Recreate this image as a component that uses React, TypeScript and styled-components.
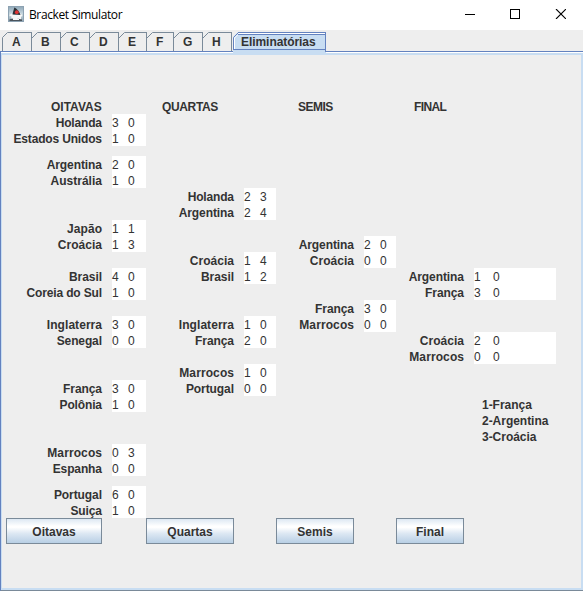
import React from "react";
import styled, { createGlobalStyle } from "styled-components";

const GlobalStyle = createGlobalStyle`
  * { box-sizing: border-box; }
  html, body { margin: 0; padding: 0; overflow: hidden; }
`;

const STEEL = "#7a8a99";
const BLUE = "#6382bf";
const PALE = "#c8ddf2";

const Window = styled.div`
  width: 583px;
  height: 591px;
  display: flex;
  flex-direction: column;
  background: #eeeeee;
  color: #333333;
  font: bold 12px/16px "Liberation Sans", Arial, sans-serif;
  white-space: pre;
`;

const TitleBar = styled.header`
  height: 30px;
  flex: none;
  display: flex;
  align-items: center;
  padding: 0 17px 2px 8px;
  background: #ffffff;
  color: #000000;
`;

const Title = styled.span`
  flex: 1;
  margin: 2px 0 0 5px;
  font: 12px/16px "Open Sans", "Noto Sans", sans-serif;
  letter-spacing: -0.38px;
`;

const Controls = styled.div`
  display: flex;
  gap: 35px;
  width: 102px;
  svg { display: block; flex: none; }
`;

const TabStrip = styled.nav`
  height: 21px;
  flex: none;
  display: flex;
  padding: 2px 0 0 2px;
`;

const TabBox = styled.div<{ $w: number }>`
  width: ${(p) => p.$w}px;
  height: 19px;
  display: flex;
  svg { flex: none; display: block; }
`;

const TabBody = styled.div<{ $pad: number }>`
  flex: 1;
  border-top: 1px solid ${STEEL};
  border-right: 1px solid ${STEEL};
  padding: 1px 0 0 ${(p) => p.$pad}px;
`;

const ActiveTab = styled.div`
  width: 93px;
  height: 22px;
  margin-left: 1px;
  display: flex;
  position: relative;
  z-index: 1;
  svg { flex: none; display: block; }
`;

const ActiveBody = styled.div`
  flex: 1;
  height: 22px;
  padding: 2px 0 0 3px;
  letter-spacing: -0.06px;
  background:
    linear-gradient(${BLUE}, ${BLUE}) right top / 1px 20px no-repeat,
    linear-gradient(
      ${BLUE} 0 1px, #ffffff 1px 2px, ${BLUE} 2px 3px,
      ${PALE} 3px 17px, ${BLUE} 17px 18px, ${PALE} 18px
    );
`;

const Panel = styled.main`
  flex: 1;
  display: flex;
  flex-direction: column;
  border: solid ${STEEL};
  border-width: 1px 0 1px 1px;
  border-top-color: ${BLUE};
  border-left-color: ${BLUE};
  padding-top: 1px;
  background: #ffffff;
`;

const PanelInner = styled.div`
  flex: 1;
  border: 2px solid ${PALE};
  border-left-width: 1px;
  background: #eeeeee;
`;

const Bracket = styled.section`
  display: grid;
  grid-template-columns: 144px 130px 120px 185px;
  height: 446px;
  margin-top: 43px;
`;

const Stage = styled.div`
  display: flex;
  flex-direction: column;
`;

const StageTitle = styled.div<{ $left: number; $track: number }>`
  height: 16px;
  padding-top: 1px;
  margin-left: ${(p) => p.$left}px;
  letter-spacing: ${(p) => p.$track}px;
`;

const Match = styled.div<{ $gap: number }>`
  margin-top: ${(p) => p.$gap}px;
`;

const TeamRow = styled.div<{ $label: number }>`
  display: grid;
  grid-template-columns: ${(p) => p.$label}px auto;
  column-gap: 10px;
  height: 16px;
`;

const TeamName = styled.span<{ $track: number }>`
  justify-self: end;
  padding-top: 1px;
  letter-spacing: ${(p) => p.$track}px;
  margin-right: ${(p) => -p.$track}px;
`;

const Score = styled.div<{ $w: number; $step: number }>`
  width: ${(p) => p.$w}px;
  height: 16px;
  display: grid;
  grid-template-columns: ${(p) => p.$step}px auto;
  background: #ffffff;
  font-weight: normal;
  padding-top: 1px;
`;

const Ranking = styled.div`
  margin: 33px 0 0 86px;
  letter-spacing: -0.03px;
`;

const StageButton = styled.button<{ $left: number; $w: number }>`
  width: ${(p) => p.$w}px;
  height: 26px;
  margin: auto 0 0 ${(p) => p.$left}px;
  padding: 1px 0 0;
  border: 1px solid ${STEEL};
  background: linear-gradient(#dde8f3 0%, #ffffff 30%, #ffffff 35%, #dde8f3 60%, #b8cfe5 100%);
  font: inherit;
  color: inherit;
`;

const tabs: [string, number, number][] = [
  ["A", 30, 3], ["B", 29, 3], ["C", 29, 3], ["D", 29, 3],
  ["E", 28, 3], ["F", 27, 3], ["G", 29, 3], ["H", 29, 3],
];

const nameTracking: Record<string, number> = {
  "Holanda": -0.17,
  "Estados Unidos": -0.17,
  "Argentina": -0.08,
  "Austrália": 0.02,
  "Japão": 0.05,
  "Croácia": 0.04,
  "Brasil": -0.06,
  "Coreia do Sul": -0.16,
  "Inglaterra": 0.05,
  "Senegal": -0.12,
  "França": -0.08,
  "Polônia": -0.15,
  "Marrocos": 0.1,
  "Espanha": -0.12,
  "Portugal": -0.08,
  "Suiça": -0.12,
};

type Team = [string, string, string];
type Pair = { gap: number; teams: [Team, Team] };
type StageData = {
  title: string; left: number; track: number; label: number;
  box: number; step: number; button: string; bLeft: number; bWidth: number;
  matches: Pair[]; ranking?: string[];
};

const stages: StageData[] = [
  {
    title: "OITAVAS", left: 49, track: 0, label: 100, box: 34, step: 16,
    button: "Oitavas", bLeft: 4, bWidth: 96,
    matches: [
      { gap: 0, teams: [["Holanda", "3", "0"], ["Estados Unidos", "1", "0"]] },
      { gap: 10, teams: [["Argentina", "2", "0"], ["Austrália", "1", "0"]] },
      { gap: 32, teams: [["Japão", "1", "1"], ["Croácia", "1", "3"]] },
      { gap: 16, teams: [["Brasil", "4", "0"], ["Coreia do Sul", "1", "0"]] },
      { gap: 16, teams: [["Inglaterra", "3", "0"], ["Senegal", "0", "0"]] },
      { gap: 32, teams: [["França", "3", "0"], ["Polônia", "1", "0"]] },
      { gap: 32, teams: [["Marrocos", "0", "3"], ["Espanha", "0", "0"]] },
      { gap: 10, teams: [["Portugal", "6", "0"], ["Suiça", "1", "0"]] },
    ],
  },
  {
    title: "QUARTAS", left: 16, track: -0.35, label: 88, box: 32, step: 16,
    button: "Quartas", bLeft: 0, bWidth: 88,
    matches: [
      { gap: 74, teams: [["Holanda", "2", "3"], ["Argentina", "2", "4"]] },
      { gap: 32, teams: [["Croácia", "1", "4"], ["Brasil", "1", "2"]] },
      { gap: 32, teams: [["Inglaterra", "1", "0"], ["França", "2", "0"]] },
      { gap: 16, teams: [["Marrocos", "1", "0"], ["Portugal", "0", "0"]] },
    ],
  },
  {
    title: "SEMIS", left: 22, track: -0.5, label: 78, box: 32, step: 16,
    button: "Semis", bLeft: 0, bWidth: 78,
    matches: [
      { gap: 122, teams: [["Argentina", "2", "0"], ["Croácia", "0", "0"]] },
      { gap: 32, teams: [["França", "3", "0"], ["Marrocos", "0", "0"]] },
    ],
  },
  {
    title: "FINAL", left: 18, track: -0.6, label: 68, box: 82, step: 19,
    button: "Final", bLeft: 0, bWidth: 68,
    matches: [
      { gap: 154, teams: [["Argentina", "1", "0"], ["França", "3", "0"]] },
      { gap: 32, teams: [["Croácia", "2", "0"], ["Marrocos", "0", "0"]] },
    ],
    ranking: ["1-França", "2-Argentina", "3-Croácia"],
  },
];

const DukeIcon = () => (
  <svg width="16" height="16" viewBox="0 0 16 16">
    <defs>
      <linearGradient id="duke" x1="0" y1="0" x2="0" y2="1">
        <stop offset="0" stopColor="#8fa8b8" />
        <stop offset="0.5" stopColor="#c9d8e0" />
        <stop offset="1" stopColor="#8ea3b0" />
      </linearGradient>
    </defs>
    <rect x=".5" y=".5" width="15" height="15" fill="url(#duke)" stroke="#8da2b2" />
    <path d="M1 9.2 3.5 7.5 6 8.5 10 8.5 12.5 7.5 14.5 9.5 13 11 13 14H3L3.5 10.5z" fill="#f6f7f7" />
    <path d="M4.5 8.5C5.2 5.4 5.8 3 6.5 1.5 9 2.8 11.8 5.8 12.5 9L9.5 8.8z" fill="#2b3036" />
    <path d="M1.5 13.6 4 12.4 7 13.6 9 12.6 14 13.6V15H1.5z" fill="#4b545c" />
    <path d="M5 13 8 11.5 11 13V14H5z" fill="#f6f7f7" />
    <circle cx="8.8" cy="6.2" r="1.9" fill="#e23434" />
  </svg>
);

const Tab = ({ name, width, pad, first }: { name: string; width: number; pad: number; first: boolean }) => (
  <TabBox $w={width}>
    <svg width={first ? 7 : 6} height="19" fill="none" stroke={STEEL}>
      <path d={first ? "M.5 19V5.5L5.5.5H7" : "M0 6 5.5.5H6"} />
    </svg>
    <TabBody $pad={pad}>{name}</TabBody>
  </TabBox>
);

export default function App() {
  return (
    <>
      <GlobalStyle />
      <Window>
        <TitleBar>
          <DukeIcon />
          <Title>Bracket Simulator</Title>
          <Controls>
            <svg width="11" height="10" shapeRendering="crispEdges"><path d="M1 5.5H11" stroke="#000" /></svg>
            <svg width="10" height="10" shapeRendering="crispEdges"><rect x=".5" y=".5" width="9" height="9" fill="none" stroke="#000" /></svg>
            <svg width="11" height="10"><path d="M1 0 11 10M11 0 1 10" stroke="#000" strokeWidth="1.1" /></svg>
          </Controls>
        </TitleBar>
        <TabStrip>
          {tabs.map(([name, width, pad], i) => (
            <Tab key={name} name={name} width={width} pad={pad} first={i === 0} />
          ))}
          <ActiveTab>
            <svg width="5" height="22" fill="none">
              <path d="M0 22V5L5 0V22z" fill={PALE} />
              <path d="M1.5 17V6L5 2.5" stroke="#fff" />
              <path d="M.5 18V5.5L5.5.5M0 17.5H5" stroke={BLUE} />
            </svg>
            <ActiveBody>Eliminatórias</ActiveBody>
          </ActiveTab>
        </TabStrip>
        <Panel>
          <PanelInner>
            <Bracket>
              {stages.map((s) => (
                <Stage key={s.title}>
                  <StageTitle $left={s.left} $track={s.track}>{s.title}</StageTitle>
                  {s.matches.map((m, i) => (
                    <Match key={i} $gap={m.gap}>
                      {m.teams.map(([name, a, b]) => (
                        <TeamRow key={name} $label={s.label}>
                          <TeamName $track={nameTracking[name]}>{name}</TeamName>
                          <Score $w={s.box} $step={s.step}><span>{a}</span><span>{b}</span></Score>
                        </TeamRow>
                      ))}
                    </Match>
                  ))}
                  {s.ranking && (
                    <Ranking>{s.ranking.map((r) => <div key={r}>{r}</div>)}</Ranking>
                  )}
                  <StageButton $left={s.bLeft} $w={s.bWidth}>{s.button}</StageButton>
                </Stage>
              ))}
            </Bracket>
          </PanelInner>
        </Panel>
      </Window>
    </>
  );
}
